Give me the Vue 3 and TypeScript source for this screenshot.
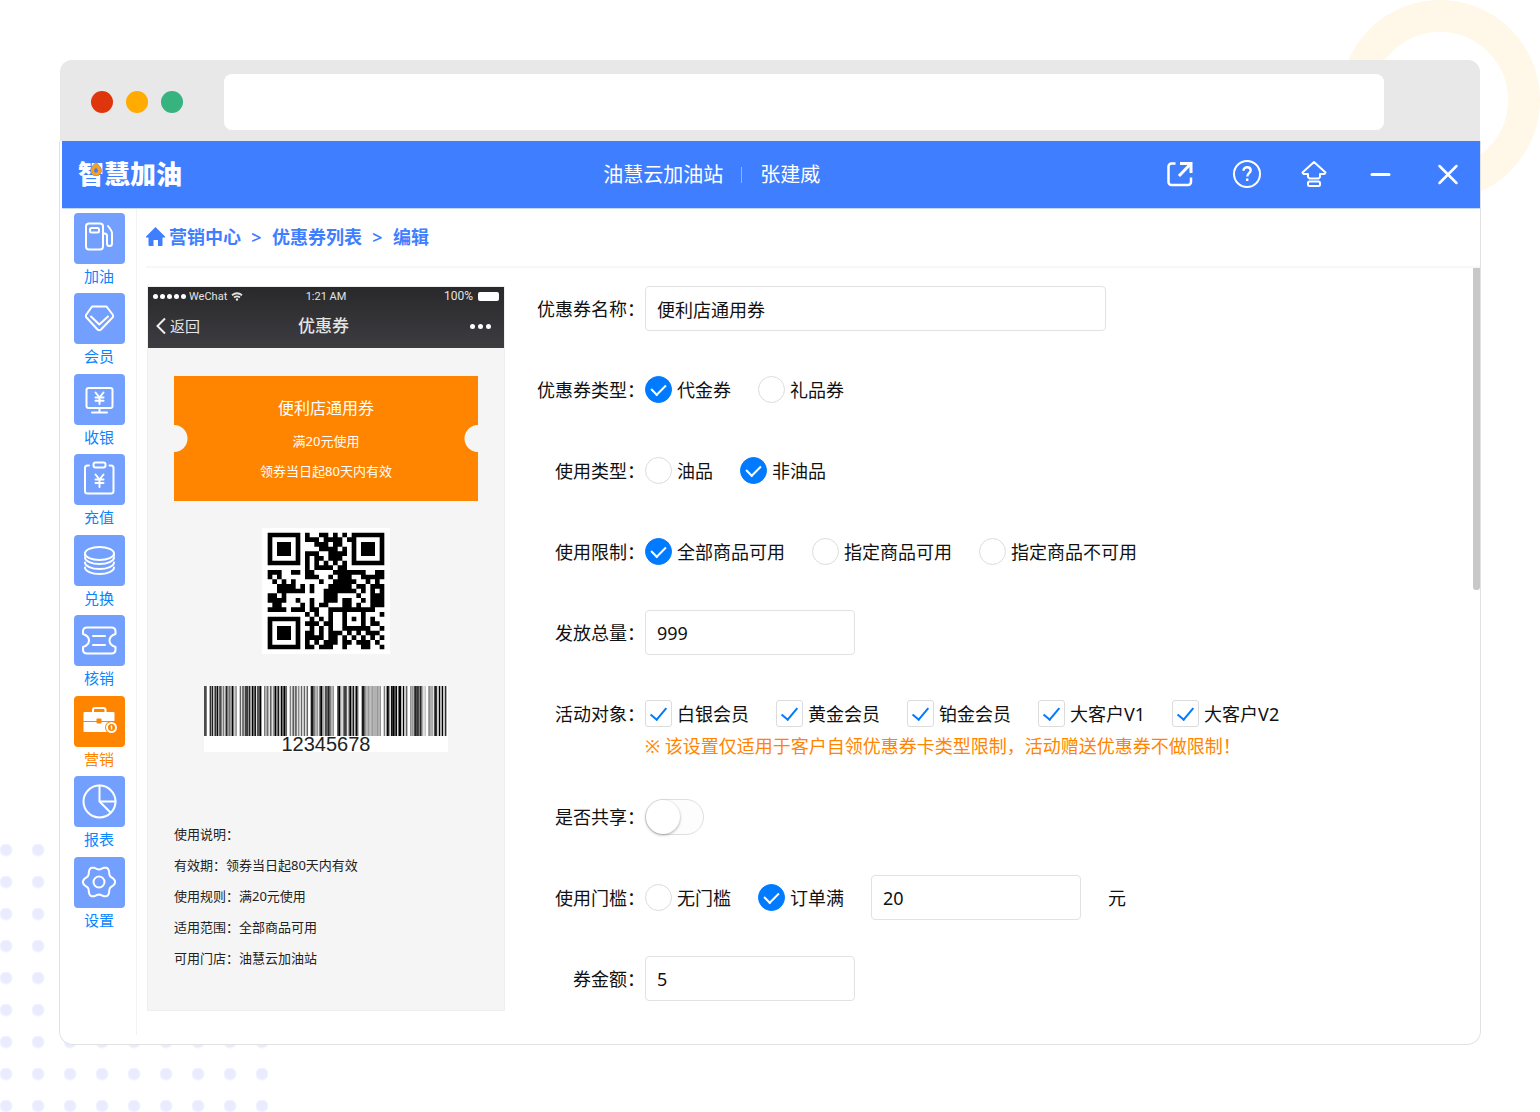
<script setup lang="ts">
import { ref } from 'vue'

interface NavItem { key: string; label: string }
interface Option { value: string; label: string }

const navItems: NavItem[] = [
  { key: 'fuel', label: '加油' },
  { key: 'member', label: '会员' },
  { key: 'cashier', label: '收银' },
  { key: 'recharge', label: '充值' },
  { key: 'exchange', label: '兑换' },
  { key: 'verify', label: '核销' },
  { key: 'marketing', label: '营销' },
  { key: 'report', label: '报表' },
  { key: 'settings', label: '设置' },
]
const activeNav = ref('marketing')

const couponName = ref('便利店通用券')
const couponTypes: Option[] = [
  { value: 'cash', label: '代金券' },
  { value: 'gift', label: '礼品券' },
]
const couponType = ref('cash')
const useTypes: Option[] = [
  { value: 'oil', label: '油品' },
  { value: 'nonoil', label: '非油品' },
]
const useType = ref('nonoil')
const limits: Option[] = [
  { value: 'all', label: '全部商品可用' },
  { value: 'some', label: '指定商品可用' },
  { value: 'except', label: '指定商品不可用' },
]
const limit = ref('all')
const total = ref('999')
const audiences = ['白银会员', '黄金会员', '铂金会员', '大客户V1', '大客户V2']
const audience = ref([...audiences])
const shared = ref(false)
const threshold = ref('amount')
const thresholdAmount = ref('20')
const amount = ref('5')

const usage = [
  '使用说明：',
  '有效期：领券当日起80天内有效',
  '使用规则：满20元使用',
  '适用范围：全部商品可用',
  '可用门店：油慧云加油站',
]

const qrRows = [
  '1111111010011010101111111',
  '1000001011101111011000001',
  '1011101000111011001011101',
  '1011101000011110101011101',
  '1011101011100111101011101',
  '1000001010110111001000001',
  '1111111010101010101111111',
  '0000000010111101100000000',
  '1110011011000011111110011',
  '1010000011100101110011111',
  '0101010000010011111001010',
  '0011110101000111110110111',
  '0011111101001111111010101',
  '1101000000001110000100111',
  '1111001001001110110010111',
  '0110000101011000110100111',
  '1111011101100111111111100',
  '0000000010100100100010001',
  '1111111001010100101010100',
  '1000001011101100100010110',
  '1011101001010100111111001',
  '1011101011010111010101110',
  '1011101011110110101010101',
  '1000001010101110110111010',
  '1111111011011100100011001',
]
const qrPath = qrRows
  .flatMap((row, y) => [...row].map((c, x) => (c === '1' ? `M${x} ${y}h1v1h-1z` : '')))
  .join('')

// Each group: left edge, width, then the grey level of every stripe from 0 (black) to 9.
const barGroups: [number, number, string][] = [
  [25, 8, '3'],
  [42, 81, '1609050705849056370585'],
  [132, 65, '4927206080409130'],
  [205, 69, '574939505180404'],
  [282, 55, '5938295949494'],
  [345, 70, '1057692068140576'],
  [425, 63, '106950493061804'],
  [498, 58, '1067677677676'],
  [564, 71, '5901900309009094'],
  [643, 48, '66703050798'],
  [698, 54, '576902908092'],
]
const bars = barGroups.flatMap(([start, width, shades]) => {
  const w = width / shades.length
  return [...shades].map((s, i) => {
    const v = Math.round(Number(s) * 25)
    return { x: start + i * w, w: w + 0.2, fill: `rgb(${v},${v},${v})` }
  })
})

const gearPath = Array.from({ length: 73 }, (_, i) => {
  const t = (i / 72) * Math.PI * 2
  const r = 14.3 + 1.8 * Math.cos(6 * t)
  return `${i ? 'L' : 'M'}${(25 + r * Math.cos(t)).toFixed(2)} ${(25 + r * Math.sin(t)).toFixed(2)}`
}).join('') + 'Z'
</script>

<template>
  <div class="page" lang="zh-CN">
    <div class="ring"></div>
    <div class="dots"></div>

    <div class="window">
      <div class="chrome">
        <span class="light red"></span>
        <span class="light amber"></span>
        <span class="light green"></span>
        <input class="address" type="text" aria-label="地址" />
      </div>

      <div class="body">
        <header class="topbar">
          <div class="logo">
            智慧加油
            <svg class="drop" viewBox="0 0 12 14" width="12" height="14" aria-hidden="true">
              <path d="M6 0C8 3 11.500 5 11.500 8.500A5.500 5.500 0 0 1 .5 8.500C.5 5 4 3 6 0Z" fill="#f9a11b" stroke="#3f7eff" stroke-width=".6" />
              <path d="M6 5.500c1 1.300 2 2 2 3.200a2 2 0 0 1-4 0C4 7.500 5 6.800 6 5.500Z" fill="#3f7eff" />
            </svg>
          </div>
          <div class="station"><span>油慧云加油站</span><i></i><span>张建威</span></div>
          <div class="tools">
            <button type="button" aria-label="打开">
              <svg viewBox="0 0 28 28"><path d="M9.500 3.500H5.500a3 3 0 0 0-3 3V22a3 3 0 0 0 3 3H22a3 3 0 0 0 3-3v-4.500" stroke-width="2.500" /><path d="M14 3.500H25V13M24.500 4 13 16" stroke-width="3" /></svg>
            </button>
            <button type="button" aria-label="帮助">
              <svg viewBox="0 0 28 28"><circle cx="14" cy="14" r="13" stroke-width="2" /><path d="M10.500 10.800c0-2.300 1.600-3.600 3.600-3.600s3.600 1.300 3.600 3.200c0 2.600-3.400 2.800-3.400 6" stroke-width="2.400" /><path d="M14.200 18.500V21" stroke-width="2.400" /></svg>
            </button>
            <button type="button" aria-label="升级">
              <svg viewBox="0 0 28 28"><path d="M14 2 25.500 12.500l-1 1.500H20v3l-1.500 1.500h-9L8 17v-3H3.500l-1-1.500Z" stroke-width="2" stroke-linejoin="round" /><rect x="8" y="21.500" width="12" height="4.500" rx="1.500" stroke-width="2" /></svg>
            </button>
            <button type="button" aria-label="最小化">
              <svg viewBox="0 0 28 28"><path d="M5 14.500h17" stroke-width="3" stroke-linecap="round" /></svg>
            </button>
            <button type="button" aria-label="关闭">
              <svg viewBox="0 0 28 28"><path d="m5.500 6 17 17m0-17-17 17" stroke-width="2.500" stroke-linecap="round" /></svg>
            </button>
          </div>
        </header>

        <div class="columns">
          <nav class="side">
            <a
              v-for="item in navItems"
              :key="item.key"
              href="#"
              class="side-item"
              :class="{ active: item.key === activeNav }"
              @click.prevent="activeNav = item.key"
            >
              <span class="tile">
                <svg viewBox="0 0 51 51" aria-hidden="true">
                  <template v-if="item.key === 'fuel'">
                    <rect x="12" y="10.500" width="17" height="26" rx="3" />
                    <rect x="16" y="15" width="9" height="4.500" rx="1.500" />
                    <path d="M29 20.500h1.500q2.500 0 2.500 2.500v7.500q0 2.500 2.500 2.500t2.500-2.500V20q0-2-4-7" />
                  </template>
                  <template v-else-if="item.key === 'member'">
                    <path d="M18 13.500h14.500L39 22v2L27 36.500q-1.700 1.500-3.500 0L12 24v-2Z" />
                    <path d="m17 23.500 8.300 8 8.700-8" />
                  </template>
                  <template v-else-if="item.key === 'cashier'">
                    <rect x="12.500" y="14" width="26" height="20" rx="2" />
                    <path d="M25.500 34v4M18 38.500h15M21.500 18.500l4 5 4-5M25.500 23.500V30M21.500 23.500h8M21.500 26.800h8" />
                  </template>
                  <template v-else-if="item.key === 'recharge'">
                    <path d="M15 11.500h-1.500a2.500 2.500 0 0 0-2.500 2.500v23a2.500 2.500 0 0 0 2.500 2.500h23.500a2.500 2.500 0 0 0 2.500-2.500V14a2.500 2.500 0 0 0-2.500-2.500h-1.500" />
                    <rect x="19.500" y="8.500" width="12" height="5" rx="2" />
                    <path d="m21.500 20.500 4 5 4-5M25.500 25.500V33M21.500 25.500h8M21.500 29h8" />
                  </template>
                  <template v-else-if="item.key === 'exchange'">
                    <ellipse cx="25.500" cy="18.500" rx="14.500" ry="6.500" />
                    <path d="M11 18.500v2M40 18.500v2M11 22.500c0 3.500 6.500 6.500 14.500 6.500S40 26 40 22.500M11 27.500c0 3.500 6.500 6.500 14.500 6.500S40 31 40 27.500M11 32.500c0 3.500 6.500 6.500 14.500 6.500S40 36 40 32.500" />
                  </template>
                  <template v-else-if="item.key === 'verify'">
                    <path d="M13 12.500h24.500q4 0 4 4v2.500q-6 2-6 6.500t6 6.500V34.500q0 4-4 4H13q-4 0-4-4V32q6-2 6-6.500T9 19v-2.500q0-4 4-4ZM19 21h12M19 30h12" />
                  </template>
                  <template v-else-if="item.key === 'marketing'">
                    <path d="M19 16v-2q0-2 2-2h8.500q2 0 2 2v2" />
                    <rect x="9.500" y="16" width="31" height="20" rx="1" fill="#fff" stroke="none" />
                    <path d="M9 25.500h32" stroke="#ff8400" stroke-width="1" />
                    <rect x="22.500" y="22.500" width="5" height="5" rx="1" fill="#ff8400" stroke="none" />
                    <circle cx="37.500" cy="31.500" r="6.500" fill="#ff8400" stroke="none" />
                    <circle cx="37.500" cy="31.500" r="4.500" />
                    <path d="M37.500 30v3" stroke-width="1.500" />
                  </template>
                  <template v-else-if="item.key === 'report'">
                    <circle cx="25.500" cy="25.500" r="16" />
                    <path d="M25.500 9.500v16h16M25.500 25.500l11 11" />
                  </template>
                  <template v-else>
                    <path :d="gearPath" />
                    <circle cx="25" cy="25" r="5.500" />
                  </template>
                </svg>
              </span>
              <span class="side-label">{{ item.label }}</span>
            </a>
          </nav>

          <main class="main">
            <nav class="crumbs">
              <svg viewBox="0 0 19 19" width="19" height="19" aria-hidden="true"><path d="M9.500 0 19 9.500v1h-2.500V18q0 1-1 1H12v-6H7.500v6h-4q-1 0-1-1v-7.500H0v-1Z" fill="#3f7eff" /></svg>
              <a href="#">营销中心</a><span>&gt;</span><a href="#">优惠券列表</a><span>&gt;</span><a href="#">编辑</a>
            </nav>

            <div class="content">
              <section class="phone">
                <div class="phone-top">
                  <div class="status">
                    <span class="carrier">
                      <b v-for="n in 5" :key="n"></b>
                      <em>WeChat</em>
                      <svg viewBox="0 0 12 9" width="12" height="9" aria-hidden="true"><path d="M1 3.200Q6-.8 11 3.200M3 5.500q3-2.300 6 0" fill="none" stroke="#e4e4e4" stroke-width="1.800" /><circle cx="6" cy="7.500" r="1.200" fill="#e4e4e4" /></svg>
                    </span>
                    <span>1:21 AM</span>
                    <span class="battery">100%<i></i></span>
                  </div>
                  <div class="phone-nav">
                    <a href="#" class="back">
                      <svg viewBox="0 0 10 18" width="10" height="18" aria-hidden="true"><path d="M9 1.500 1.500 9 9 16.500" fill="none" stroke="#eee" stroke-width="2" /></svg>返回
                    </a>
                    <strong>优惠券</strong>
                    <span class="more"><b v-for="n in 3" :key="n"></b></span>
                  </div>
                </div>

                <div class="ticket">
                  <h3>{{ couponName }}</h3>
                  <p>满20元使用</p>
                  <p>领券当日起80天内有效</p>
                </div>

                <svg class="qr" viewBox="-1 -1 27 27" role="img" aria-label="二维码"><path :d="qrPath" /></svg>

                <div class="barcode">
                  <svg viewBox="25 0 732 150" preserveAspectRatio="none" aria-hidden="true">
                    <rect v-for="(b, i) in bars" :key="i" :x="b.x" y="0" :width="b.w" height="150" :fill="b.fill" />
                  </svg>
                  <span>12345678</span>
                </div>

                <div class="usage"><p v-for="line in usage" :key="line">{{ line }}</p></div>
              </section>

              <form class="form" @submit.prevent>
                <div class="row">
                  <label class="name" for="coupon-name">优惠券名称：</label>
                  <input id="coupon-name" v-model="couponName" class="text wide" type="text" />
                </div>
                <div class="row" role="radiogroup" aria-labelledby="l-type">
                  <span id="l-type" class="name">优惠券类型：</span>
                  <label v-for="o in couponTypes" :key="o.value" class="option">
                    <input v-model="couponType" type="radio" name="coupon-type" :value="o.value" />{{ o.label }}
                  </label>
                </div>
                <div class="row" role="radiogroup" aria-labelledby="l-use">
                  <span id="l-use" class="name">使用类型：</span>
                  <label v-for="o in useTypes" :key="o.value" class="option">
                    <input v-model="useType" type="radio" name="use-type" :value="o.value" />{{ o.label }}
                  </label>
                </div>
                <div class="row" role="radiogroup" aria-labelledby="l-limit">
                  <span id="l-limit" class="name">使用限制：</span>
                  <label v-for="o in limits" :key="o.value" class="option">
                    <input v-model="limit" type="radio" name="limit" :value="o.value" />{{ o.label }}
                  </label>
                </div>
                <div class="row">
                  <label class="name" for="total">发放总量：</label>
                  <input id="total" v-model="total" class="text" type="text" />
                </div>
                <div class="stack">
                  <div class="row" role="group" aria-labelledby="l-aud">
                    <span id="l-aud" class="name">活动对象：</span>
                    <label v-for="a in audiences" :key="a" class="option">
                      <input v-model="audience" type="checkbox" :value="a" />{{ a }}
                    </label>
                  </div>
                  <p class="hint">※ 该设置仅适用于客户自领优惠券卡类型限制，活动赠送优惠券不做限制！</p>
                </div>
                <div class="row">
                  <label class="name" for="shared">是否共享：</label>
                  <input id="shared" v-model="shared" class="switch" type="checkbox" role="switch" />
                </div>
                <div class="row" role="radiogroup" aria-labelledby="l-th">
                  <span id="l-th" class="name">使用门槛：</span>
                  <label class="option"><input v-model="threshold" type="radio" name="threshold" value="none" />无门槛</label>
                  <label class="option"><input v-model="threshold" type="radio" name="threshold" value="amount" />订单满</label>
                  <input v-model="thresholdAmount" class="text" type="text" aria-label="订单满金额" />
                  <span class="unit">元</span>
                </div>
                <div class="row">
                  <label class="name" for="amount">券金额：</label>
                  <input id="amount" v-model="amount" class="text" type="text" />
                </div>
              </form>

              <div class="scroll"></div>
            </div>
          </main>
        </div>
      </div>
    </div>
  </div>
</template>

<style>
body { background: #fff; }
</style>

<style scoped>
* { box-sizing: border-box; margin: 0; padding: 0; }
.page {
  position: relative;
  min-height: 100vh;
  overflow: hidden;
  padding: 60px 59px;
  font-family: "Noto Sans", "Noto Sans CJK SC", sans-serif;
  font-size: 18px;
  line-height: 24px;
  color: #222;
}
a { color: inherit; text-decoration: none; }
input, button { font: inherit; color: inherit; }
.ring {
  position: absolute; top: 0; right: 0;
  width: 200px; height: 200px;
  border: 32px solid #fff8e9; border-radius: 50%;
}
.dots {
  position: absolute; left: 0; bottom: 0;
  width: 268px; height: 268px;
  background: radial-gradient(circle at 6px 6px, #e9ebff 5px, transparent 7px) 0 0 / 32px 32px;
}
.window { position: relative; }
.chrome {
  display: flex; align-items: center;
  height: 81px; margin: 0 1px; padding: 2px 96px 0 31px;
  background: #e8e8e8; border-radius: 12px 12px 0 0;
}
.light { width: 22px; height: 22px; margin-right: 13px; border-radius: 50%; }
.red { background: #df350d; }
.amber { background: #ffab00; }
.green { background: #36b37e; }
.address {
  flex: 1; min-width: 0; height: 56px; margin-left: 28px; padding: 0 16px;
  background: #fff; border: 0; border-radius: 8px;
}
.body {
  padding-bottom: 9px;
  background: #fff;
  border: 1px solid #e2e2e2; border-top: 0; border-radius: 0 0 14px 14px;
}
.topbar {
  display: grid; grid-template-columns: 9fr auto 11fr; align-items: center;
  height: 68px; margin: 0 0 0 2px; padding: 0 18px 2px 16px;
  background: #3f7eff; border-bottom: 1px solid #c5d8ff; color: #fff;
}
.logo { position: relative; font-size: 26px; font-weight: 900; line-height: 32px; }
.drop { position: absolute; left: 12px; top: 4px; }
.station { display: flex; align-items: center; padding-top: 2px; font-size: 20px; }
.station i { width: 1px; height: 16px; margin: 0 18px; background: #8fb4ff; }
.tools { display: flex; justify-content: flex-end; gap: 39px; }
.tools button { width: 28px; height: 28px; background: none; border: 0; }
.tools svg { display: block; width: 28px; height: 28px; fill: none; stroke: #fff; }
.columns { display: flex; margin-left: 2px; }
.side {
  display: grid; grid-auto-rows: 1fr; align-self: stretch; align-content: start;
  width: 75px; padding: 4px 0 98px;
  border-right: 1px solid #f3f3f3;
}
.side-item { display: flex; flex-direction: column; align-items: center; color: #0a84ff; font-size: 15px; }
.tile { width: 51px; height: 51px; background: #73a0ff; border-radius: 4px; }
.tile svg { display: block; width: 51px; height: 51px; fill: none; stroke: #fff; stroke-width: 2; stroke-linecap: round; stroke-linejoin: round; }
.active { color: #ff8400; }
.active .tile { background: #ff8400; }
.main { flex: 1; min-width: 0; }
.crumbs {
  display: flex; align-items: center;
  height: 59px; margin-left: 9px; padding-bottom: 2px;
  border-bottom: 2px solid #f7f7f7;
  color: #3f7eff; font-weight: 600;
}
.crumbs svg { margin-right: 4px; }
.crumbs span { width: 31px; text-align: center; }
.content { display: flex; align-items: flex-start; padding: 0 0 24px 10px; }
.phone {
  width: 358px; flex: none; margin-top: 18px; padding-bottom: 36px;
  background: #f5f5f5; border: 1px solid #efefef;
}
.phone-top { height: 61px; background: linear-gradient(#29292b, #3d3c41); color: #e4e4e4; }
.status {
  display: grid; grid-template-columns: 1fr auto 1fr; align-items: center;
  height: 19px; padding: 0 5px; font-family: Roboto, sans-serif; font-size: 11px; line-height: 19px;
}
.carrier { display: flex; align-items: center; gap: 2px; }
.carrier b { width: 5px; height: 5px; border-radius: 50%; background: #fff; }
.carrier em { margin: 0 2px 0 1px; font-style: normal; }
.battery { display: flex; align-items: center; justify-content: flex-end; gap: 5px; font-size: 12px; }
.battery i { width: 21px; height: 9px; border-radius: 2px; background: #fff; }
.phone-nav { display: grid; grid-template-columns: 1fr auto 1fr; align-items: center; height: 40px; padding: 0 13px 0 8px; }
.back { display: flex; align-items: center; gap: 4px; font-size: 15px; }
.phone-nav strong { font-size: 17px; font-weight: 500; }
.more { display: flex; justify-content: flex-end; gap: 3px; }
.more b { width: 5px; height: 5px; border-radius: 50%; background: #fff; }
.ticket {
  height: 125px; margin: 28px 26px 27px; padding-top: 19px;
  background:
    radial-gradient(circle at 0 50%, #f5f5f5 13px, transparent 14px),
    radial-gradient(circle at 100% 50%, #f5f5f5 13px, transparent 14px),
    #ff8400;
  color: #fff; text-align: center;
}
.ticket h3 { margin-bottom: 5px; font-size: 16px; font-weight: 400; line-height: 26px; }
.ticket p { font-size: 13px; line-height: 30px; }
.qr { display: block; width: 128px; height: 126px; margin: 0 auto 32px; background: #fff; }
.barcode { width: 244px; margin: 0 auto; background: #fff; text-align: center; }
.barcode svg { display: block; width: 244px; height: 50px; }
.barcode span { display: block; font-family: "Liberation Sans", sans-serif; font-size: 20px; line-height: 16px; }
.usage { margin: 67px 26px 0; font-size: 13px; line-height: 31px; }
.form { display: flex; flex-direction: column; flex: 1; gap: 36px; min-width: 0; margin-top: 18px; color: #111; }
.row { display: flex; align-items: center; height: 45px; }
.name { width: 140px; flex: none; text-align: right; white-space: nowrap; }
.text { width: 210px; height: 45px; padding: 0 11px; background: #fff; border: 1px solid #e2e2e2; border-radius: 4px; }
.wide { width: 461px; }
.option { display: flex; align-items: center; gap: 5px; margin-right: 27px; white-space: nowrap; }
.option input {
  appearance: none; display: flex; align-items: center; justify-content: center;
  width: 27px; height: 27px; flex: none;
  background: #fff; border: 1px solid #dcdcdc;
}
.option input[type="radio"] { border-radius: 50%; }
.option input[type="checkbox"] { border-radius: 3px; }
.option input[type="radio"]:checked { background: #007aff; border-color: #007aff; }
.option input:checked::after {
  content: ""; width: 7px; height: 12px; margin-top: -3px;
  border: solid #fff; border-width: 0 2px 2px 0; transform: rotate(45deg);
}
.option input[type="checkbox"]:checked::after { width: 7px; height: 14px; border-color: #007aff; transform: rotate(40deg); }
.hint { padding-left: 140px; line-height: 23px; margin-top: -1px; color: #ff8400; }
.switch {
  appearance: none; display: flex;
  width: 59px; height: 36px;
  background: #fdfdfd; border: 1px solid #dfdfdf; border-radius: 18px;
}
.switch::after { content: ""; width: 34px; height: 34px; border-radius: 50%; background: #fff; box-shadow: 0 1px 3px #00000055; }
.switch:checked { justify-content: flex-end; background: #007aff; }
.unit { margin-left: 27px; }
.scroll { width: 7px; height: 322px; flex: none; background: #c8c8c8; border-radius: 0 0 3px 3px; }
</style>
